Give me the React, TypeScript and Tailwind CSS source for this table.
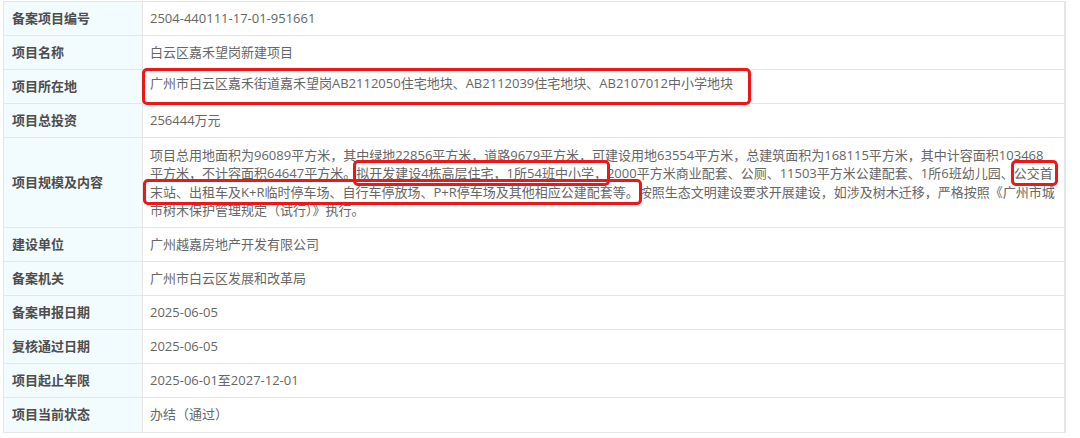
const rows: { label: string; value: string }[] = [
  { label: '备案项目编号', value: '2504-440111-17-01-951661' },
  { label: '项目名称', value: '白云区嘉禾望岗新建项目' },
];

const rowsAfter: { label: string; value: string }[] = [
  { label: '建设单位', value: '广州越嘉房地产开发有限公司' },
  { label: '备案机关', value: '广州市白云区发展和改革局' },
  { label: '备案申报日期', value: '2025-06-05' },
  { label: '复核通过日期', value: '2025-06-05' },
  { label: '项目起止年限', value: '2025-06-01至2027-12-01' },
  { label: '项目当前状态', value: '办结（通过）' },
];

function Row({ label, children, tall }: { label: string; children: React.ReactNode; tall?: boolean }) {
  return (
    <div className={`flex border-b border-[#e6e6e6] last:border-b-0 ${tall ? 'h-[90px]' : 'h-[34px]'}`}>
      <div className="w-[139px] shrink-0 bg-[#f2fbfd] border-r border-[#e6e6e6] flex items-center pl-2 font-bold text-[#4d4d4d]">
        {label}
      </div>
      <div className="flex-1 flex items-center pl-[7px] pr-2 text-[#666]">{children}</div>
    </div>
  );
}

const mark = 'outline-[3px] outline-[#ee1616] rounded-[2px]';

export default function App() {
  return (
    <div className="bg-white w-[1080px] h-[438px] pt-[1px] pl-[3px] font-['Open_Sans','Noto_Sans_CJK_SC',sans-serif] text-[13px]">
      <div className="w-[1063px] border border-r-2 border-[#e6e6e6]">
        {rows.map((r) => (
          <Row key={r.label} label={r.label}>
            {r.value}
          </Row>
        ))}
        <Row label="项目所在地">
          <span className={`${mark} pl-[5px] -ml-[5px] pr-[15px] -mr-[15px] pt-[3px] pb-[8px]`}>
            广州市白云区嘉禾街道嘉禾望岗AB2112050住宅地块、AB2112039住宅地块、AB2107012中小学地块
          </span>
        </Row>
        <Row label="项目总投资">256444万元</Row>
        <Row label="项目规模及内容" tall>
          <div className="leading-[18.5px] whitespace-nowrap">
            <div>
              项目总用地面积为96089平方米，其中绿地22856平方米，道路9679平方米，可建设用地63554平方米，总建筑面积为168115平方米，其中计容面积103468
            </div>
            <div>
              平方米，不计容面积64647平方米。
              <span className={`${mark} py-[1px]`}>拟开发建设4栋高层住宅，1所54班中小学，</span>
              2000平方米商业配套、公厕、11503平方米公建配套、1所6班幼儿园、
              <span className={`${mark} py-[1px] pr-[2px] -mr-[2px]`}>公交首</span>
            </div>
            <div>
              <span className={`${mark} pl-[4px] -ml-[4px] py-[1px]`}>
                末站、出租车及K+R临时停车场、自行车停放场、P+R停车场及其他相应公建配套等。
              </span>
              按照生态文明建设要求开展建设，如涉及树木迁移，严格按照《广州市城
            </div>
            <div>市树木保护管理规定（试行）》执行。</div>
          </div>
        </Row>
        {rowsAfter.map((r) => (
          <Row key={r.label} label={r.label}>
            {r.value}
          </Row>
        ))}
      </div>
    </div>
  );
}
